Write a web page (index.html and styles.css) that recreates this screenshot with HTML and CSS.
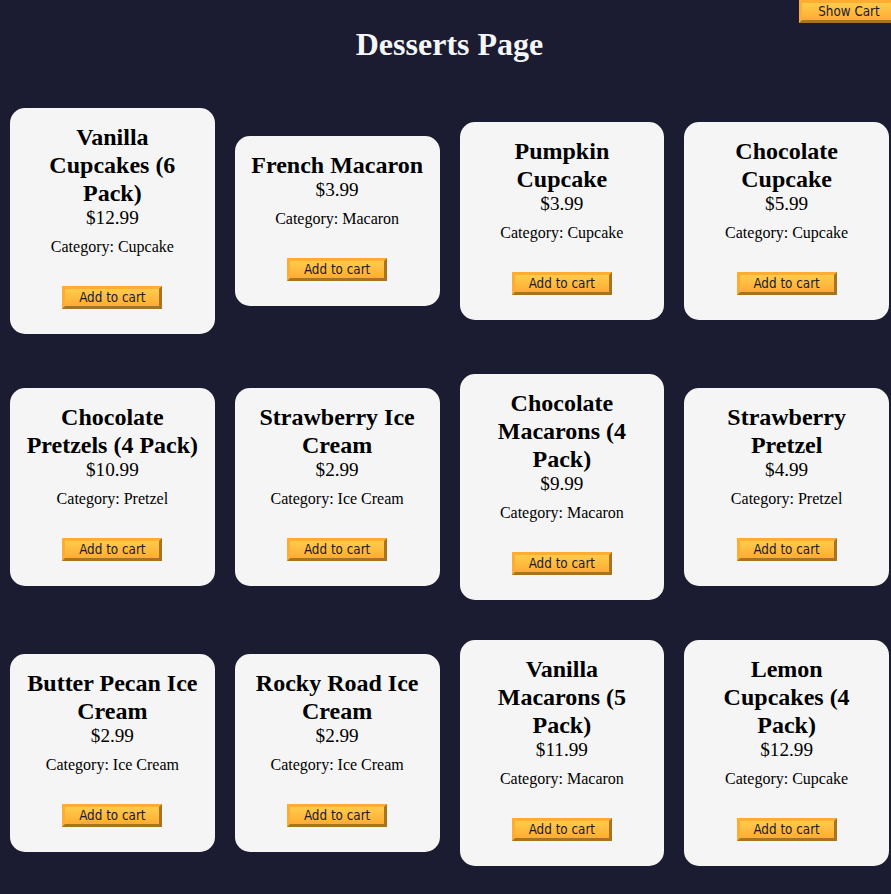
FILE: index.html
```html
<!DOCTYPE html>
<html lang="en">
<head>
<meta charset="utf-8">
<title>Desserts Page</title>
<link rel="stylesheet" href="styles.css">
</head>
<body>
<div class="page">
  <button class="btn cart-btn">Show Cart</button>
  <h1 class="title">Desserts Page</h1>
  <div class="card-container">
    <div class="dessert-card"><h2>Vanilla Cupcakes (6 Pack)</h2><p class="dessert-price">$12.99</p><p class="product-category">Category: Cupcake</p><button class="btn add-to-cart-btn">Add to cart</button></div>
    <div class="dessert-card"><h2>French Macaron</h2><p class="dessert-price">$3.99</p><p class="product-category">Category: Macaron</p><button class="btn add-to-cart-btn">Add to cart</button></div>
    <div class="dessert-card"><h2>Pumpkin Cupcake</h2><p class="dessert-price">$3.99</p><p class="product-category">Category: Cupcake</p><button class="btn add-to-cart-btn">Add to cart</button></div>
    <div class="dessert-card"><h2>Chocolate Cupcake</h2><p class="dessert-price">$5.99</p><p class="product-category">Category: Cupcake</p><button class="btn add-to-cart-btn">Add to cart</button></div>
    <div class="dessert-card"><h2>Chocolate Pretzels (4 Pack)</h2><p class="dessert-price">$10.99</p><p class="product-category">Category: Pretzel</p><button class="btn add-to-cart-btn">Add to cart</button></div>
    <div class="dessert-card"><h2>Strawberry Ice Cream</h2><p class="dessert-price">$2.99</p><p class="product-category">Category: Ice Cream</p><button class="btn add-to-cart-btn">Add to cart</button></div>
    <div class="dessert-card"><h2>Chocolate Macarons (4 Pack)</h2><p class="dessert-price">$9.99</p><p class="product-category">Category: Macaron</p><button class="btn add-to-cart-btn">Add to cart</button></div>
    <div class="dessert-card"><h2>Strawberry Pretzel</h2><p class="dessert-price">$4.99</p><p class="product-category">Category: Pretzel</p><button class="btn add-to-cart-btn">Add to cart</button></div>
    <div class="dessert-card"><h2>Butter Pecan Ice Cream</h2><p class="dessert-price">$2.99</p><p class="product-category">Category: Ice Cream</p><button class="btn add-to-cart-btn">Add to cart</button></div>
    <div class="dessert-card"><h2>Rocky Road Ice Cream</h2><p class="dessert-price">$2.99</p><p class="product-category">Category: Ice Cream</p><button class="btn add-to-cart-btn">Add to cart</button></div>
    <div class="dessert-card"><h2>Vanilla Macarons (5 Pack)</h2><p class="dessert-price">$11.99</p><p class="product-category">Category: Macaron</p><button class="btn add-to-cart-btn">Add to cart</button></div>
    <div class="dessert-card"><h2>Lemon Cupcakes (4 Pack)</h2><p class="dessert-price">$12.99</p><p class="product-category">Category: Cupcake</p><button class="btn add-to-cart-btn">Add to cart</button></div>
  </div>
</div>
</body>
</html>
```
FILE: styles.css
```css
*, *::before, *::after {
  margin: 0;
  padding: 0;
  box-sizing: border-box;
}

html, body {
  overflow: hidden;
}

body {
  background-color: #1b1b32;
  font-family: "Liberation Serif", "Times New Roman", serif;
}

.page {
  position: relative;
  display: flow-root;
  width: 899px;
}

.title {
  color: #f5f6f7;
  text-align: center;
  margin: 26px 0 25px;
  font-size: 32px;
}

.card-container {
  display: flex;
  flex-direction: row;
  flex-wrap: wrap;
  align-items: center;
}

.dessert-card {
  flex: 1 0 21%;
  background-color: #f5f5f5;
  padding: 15px;
  text-align: center;
  border-radius: 15px;
  margin: 20px 10px;
}

.dessert-card h2 {
  font-size: 24px;
  line-height: 28px;
}

.dessert-price {
  font-size: 19.2px;
  line-height: 21px;
}

.product-category {
  margin: 10px 0;
  font-size: 16px;
}

.btn {
  display: block;
  cursor: pointer;
  width: 100px;
  color: #1b1b32;
  background-color: #feac32;
  background-image: linear-gradient(#fecc4c, #ffac33);
  border: 3px outset #feac32;
  font-family: "DejaVu Sans Condensed", "DejaVu Sans", sans-serif;
  font-size: 13.33px;
  line-height: 15px;
  padding: 1px 6px;
}

.add-to-cart-btn {
  margin: 30px auto 10px;
}

.cart-btn {
  position: absolute;
  top: 0;
  right: 0;
}
```
